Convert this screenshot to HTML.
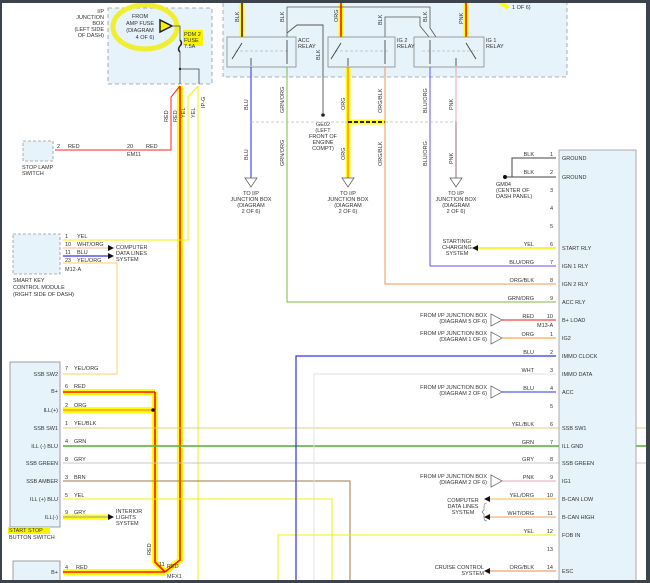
<!DOCTYPE html>
<html><head><meta charset="utf-8"><style>
html,body{margin:0;padding:0;background:#fff;}
svg{display:block;font-family:"Liberation Sans",sans-serif;}
text{font-size:5.5px;fill:#333;}
</style></head><body>
<svg width="650" height="583" viewBox="0 0 650 583" xmlns="http://www.w3.org/2000/svg">
<rect x="0" y="0" width="650" height="583" fill="#fff"/>
<!-- relay box -->
<rect x="223" y="2" width="344" height="75" fill="#e6f3fb" stroke="#999" stroke-dasharray="4,3" stroke-width="0.8"/>
<!-- IP junction box -->
<rect x="108" y="8" width="104" height="76" fill="#e6f3fb" stroke="#999" stroke-dasharray="4,3" stroke-width="0.8"/>
<ellipse cx="145" cy="27" rx="32" ry="22" fill="none" stroke="#f0ee30" stroke-width="5"/>
<polygon points="160,20 160,32 172,26" fill="#f5f000" stroke="#222" stroke-width="1.5"/>
<text x="140" y="18" text-anchor="middle">FROM</text>
<text x="140" y="25" text-anchor="middle">AMP FUSE</text>
<text x="140" y="32" text-anchor="middle">(DIAGRAM</text>
<text x="145" y="39" text-anchor="middle">4 OF 6)</text>
<text x="104" y="13" text-anchor="end">I/P</text>
<text x="104" y="19" text-anchor="end">JUNCTION</text>
<text x="104" y="25" text-anchor="end">BOX</text>
<text x="104" y="31" text-anchor="end">(LEFT SIDE</text>
<text x="104" y="37" text-anchor="end">OF DASH)</text>
<rect x="183" y="30" width="20" height="16" fill="#f8f400"/>
<text x="184" y="36">PDM 2</text><text x="184" y="42">FUSE</text><text x="184" y="48">7.5A</text>
<path d="M172,26 H180 V40 M180,52 V69 H199 V84 M180,69 V84" fill="none" stroke="#444" stroke-width="0.8"/>
<path d="M180,40 q3,3 0,6 q-3,3 0,6" fill="none" stroke="#222" stroke-width="1.5"/>
<circle cx="180" cy="69" r="1.2" fill="#222"/>

<!-- main highlighted wires -->
<g fill="none" stroke-linejoin="miter">
<path d="M180,86 V560 L165,572 M155,392 V562 L165,572 M63,392 H155 M63,410 H155 M63,572 H165" stroke="#ffff00" stroke-width="6"/>
<path d="M63,517 H110 M242,2 V37 M341,2 V37 M466,2 V37 M348,66 V178 M348,122 H385" stroke="#ffff00" stroke-width="5"/>
<path d="M180,86 V560 L165,572 M155,392 V562 L165,572 M63,392 H155 M63,572 H165 M242,2 V37 M341,2 V37 M466,2 V37" stroke="#ff1010" stroke-width="1.6"/>
<path d="M63,410 H153 M348,66 V178" stroke="#ff9a20" stroke-width="1.6"/>
<path d="M63,517 H110" stroke="#aaa" stroke-width="1.2"/>
<path d="M242,2 V37" stroke="#222" stroke-width="1.2"/>
<path d="M348,122 H385" stroke="#222" stroke-width="2" stroke-dasharray="4,2"/>
<path d="M180,86 L171,97 V150 H55" stroke="#ff2020" stroke-width="1"/>
<path d="M198,86 L188,97 V240 H63 M198,86 V583" stroke="#f4f000" stroke-width="1"/>
<!-- relays wiring top -->
<path d="M287,37 V7 H430 V28 L436,37 M385,37 V17 H420 V26 L429,37" stroke="#555" stroke-width="0.8"/>
<path d="M287,33 L297,25 H323 V113" stroke="#555" stroke-width="0.9"/>
<path d="M500,2 L508,8" stroke="#ffff00" stroke-width="4"/>
</g>
<text x="512" y="9">1 OF 6)</text>
<circle cx="323" cy="115" r="1.8" fill="#222"/>
<g text-anchor="middle">
<text x="323" y="126">GE02</text><text x="323" y="132">(LEFT</text><text x="323" y="138">FRONT OF</text><text x="323" y="144">ENGINE</text><text x="323" y="150">COMPT)</text>
</g>
<!-- relays -->
<g fill="#e6f3fb" stroke="#888" stroke-width="0.8">
<rect x="227" y="37" width="69" height="30"/><rect x="328" y="37" width="67" height="30"/><rect x="414" y="37" width="70" height="30"/>
</g>
<g stroke="#bbb" stroke-dasharray="3,2" stroke-width="0.7"><path d="M235,51 H290 M335,51 H388 M422,51 H478"/></g>
<g stroke="#333" stroke-width="0.8" fill="none">
<path d="M242,43 L232,59 M251,58 V66 M287,40 V64 M341,43 L331,59 M348,58 V66 M385,40 V64 M430,40 V64 M466,43 L476,59 M456,58 V66"/>
</g>
<text x="298" y="42">ACC</text><text x="298" y="48">RELAY</text>
<text x="397" y="42">IG 2</text><text x="397" y="48">RELAY</text>
<text x="486" y="42">IG 1</text><text x="486" y="48">RELAY</text>
<!-- relay down wires -->
<g fill="none">
<path d="M251,67 V178" stroke="#2a2af0" stroke-width="1"/>
<path d="M287,67 V302 H556" stroke="#80b840" stroke-width="1"/>
<path d="M385,67 V284 H556" stroke="#f09a50" stroke-width="1"/>
<path d="M430,67 V266 H556" stroke="#6050f0" stroke-width="1"/>
<path d="M456,67 V122" stroke="#f0a0b0" stroke-width="1"/>
<path d="M456,122 V178" stroke="#9a7070" stroke-width="1"/>
<path d="M251,122 H348 M385,122 H456" stroke="#bbb" stroke-width="0.7" stroke-dasharray="3,2"/>
</g>
<g fill="#fff" stroke="#555" stroke-width="0.7">
<polygon points="245,178 257,178 251,187"/><polygon points="342,178 354,178 348,187"/><polygon points="450,178 462,178 456,187"/>
</g>
<g text-anchor="middle">
<text x="251" y="195">TO I/P</text><text x="251" y="201">JUNCTION BOX</text><text x="251" y="207">(DIAGRAM</text><text x="251" y="213">2 OF 6)</text>
<text x="348" y="195">TO I/P</text><text x="348" y="201">JUNCTION BOX</text><text x="348" y="207">(DIAGRAM</text><text x="348" y="213">2 OF 6)</text>
<text x="456" y="195">TO I/P</text><text x="456" y="201">JUNCTION BOX</text><text x="456" y="207">(DIAGRAM</text><text x="456" y="213">2 OF 6)</text>
</g>
<g font-size="5">
<text transform="translate(239,22) rotate(-90)">BLK</text><text transform="translate(284,22) rotate(-90)">BLK</text>
<text transform="translate(338,22) rotate(-90)">ORG</text><text transform="translate(382,25) rotate(-90)">BLK</text>
<text transform="translate(427,22) rotate(-90)">BLK</text><text transform="translate(463,24) rotate(-90)">PNK</text>
<text transform="translate(320,60) rotate(-90)">BLK</text>
<text transform="translate(248,110) rotate(-90)">BLU</text><text transform="translate(284,113) rotate(-90)">GRN/ORG</text>
<text transform="translate(345,110) rotate(-90)">ORG</text><text transform="translate(382,113) rotate(-90)">ORG/BLK</text>
<text transform="translate(427,113) rotate(-90)">BLU/ORG</text><text transform="translate(453,110) rotate(-90)">PNK</text>
<text transform="translate(248,160) rotate(-90)">BLU</text><text transform="translate(284,166) rotate(-90)">GRN/ORG</text>
<text transform="translate(345,160) rotate(-90)">ORG</text><text transform="translate(382,166) rotate(-90)">ORG/BLK</text>
<text transform="translate(427,166) rotate(-90)">BLU/ORG</text><text transform="translate(453,164) rotate(-90)">PNK</text>
<text transform="translate(168,122) rotate(-90)">RED</text><text transform="translate(177,122) rotate(-90)">RED</text>
<text transform="translate(185,118) rotate(-90)">YEL</text><text transform="translate(195,118) rotate(-90)">YEL</text>
<text transform="translate(205,108) rotate(-90)">IP-G</text>
<text transform="translate(151,555) rotate(-90)">RED</text>
</g>
<!-- stop lamp -->
<rect x="23" y="141" width="30" height="20" fill="#e6f3fb" stroke="#999" stroke-dasharray="3,2" stroke-width="0.8"/>
<text x="57" y="148">2</text><text x="68" y="148">RED</text><text x="127" y="148">20</text><text x="146" y="148">RED</text><text x="127" y="156">EM11</text>
<text x="22" y="169">STOP LAMP</text><text x="22" y="175">SWITCH</text>
<!-- smart key -->
<rect x="13" y="234" width="47" height="40" fill="#e6f3fb" stroke="#999" stroke-dasharray="3,2" stroke-width="0.8"/>
<path d="M63,248 H110" stroke="#f0a870" stroke-width="0.8"/>
<path d="M63,256 H110" stroke="#3030f0" stroke-width="1.2"/>
<path d="M63,263 H117 V374 H63" stroke="#ffd060" stroke-width="0.9" fill="none"/>
<polygon points="108,245 114,248 108,251" fill="#111"/><polygon points="108,253 114,256 108,259" fill="#111"/>
<text x="65" y="238">1</text><text x="77" y="238">YEL</text>
<text x="65" y="246">10</text><text x="77" y="246">WHT/ORG</text>
<text x="65" y="254">11</text><text x="77" y="254">BLU</text>
<text x="65" y="262">23</text><text x="77" y="262">YEL/ORG</text>
<text x="65" y="271">M12-A</text>
<text x="116" y="249">COMPUTER</text><text x="116" y="255">DATA LINES</text><text x="116" y="261">SYSTEM</text>
<text x="13" y="282">SMART KEY</text><text x="13" y="289">CONTROL MODULE</text><text x="13" y="296">(RIGHT SIDE OF DASH)</text>
<!-- start stop -->
<rect x="10" y="362" width="50" height="165" fill="#e6f3fb" stroke="#888" stroke-width="0.8"/>
<rect x="8" y="527" width="42" height="7" fill="#f8f400"/>
<text x="9" y="532">START STOP</text><text x="9" y="539">BUTTON SWITCH</text>
<g text-anchor="end">
<text x="58" y="376">SSB SW2</text><text x="58" y="393">B+</text><text x="58" y="412">ILL(+)</text><text x="58" y="430">SSB SW1</text>
<text x="58" y="448">ILL (-) BLU</text><text x="58" y="465">SSB GREEN</text><text x="58" y="483">SSB AMBER</text><text x="58" y="501">ILL (+) BLU</text><text x="58" y="519">ILL(-)</text>
</g>
<g><text x="65" y="370">7</text><text x="74" y="370">YEL/ORG</text>
<text x="65" y="388">6</text><text x="74" y="388">RED</text>
<text x="65" y="407">2</text><text x="74" y="407">ORG</text>
<text x="65" y="425">1</text><text x="74" y="425">YEL/BLK</text>
<text x="65" y="443">4</text><text x="74" y="443">GRN</text>
<text x="65" y="461">8</text><text x="74" y="461">GRY</text>
<text x="65" y="479">3</text><text x="74" y="479">BRN</text>
<text x="65" y="497">5</text><text x="74" y="497">YEL</text>
<text x="65" y="514">9</text><text x="74" y="514">GRY</text></g>
<text x="116" y="513">INTERIOR</text><text x="116" y="519">LIGHTS</text><text x="116" y="525">SYSTEM</text>
<polygon points="108,514 114,517 108,520" fill="#111"/>
<circle cx="153" cy="410" r="1.8" fill="#111"/>
<g fill="none">
<path d="M63,428 H650" stroke="#d8d080" stroke-width="1"/>
<path d="M63,446 H650" stroke="#6ab84c" stroke-width="1.8"/>
<path d="M63,463 H650" stroke="#c8c8c8" stroke-width="1"/>
<path d="M63,481 H350 V583" stroke="#a07840" stroke-width="1"/>
<path d="M63,499 H332 V583" stroke="#f4f000" stroke-width="1"/>
<path d="M278,583 V535 H556" stroke="#f4f000" stroke-width="1"/>
<path d="M296,583 V356 H556" stroke="#3030f0" stroke-width="1.2"/>
<path d="M314,583 V374 H556" stroke="#e0e0e0" stroke-width="1"/>
</g>
<rect x="13" y="561" width="47" height="22" fill="#e6f3fb" stroke="#888" stroke-width="0.8"/>
<text x="58" y="574" text-anchor="end">B+</text><text x="65" y="569">4</text><text x="76" y="569">RED</text>
<text x="159" y="566">11</text><text x="167" y="568">RED</text><text x="167" y="578">MFX1</text>
<!-- right module -->
<rect x="559" y="150" width="77" height="433" fill="#e6f3fb" stroke="#999" stroke-width="0.8"/>
<g fill="none" stroke-width="1">
<path d="M556,158 H512 V177 M556,177 H505" stroke="#444"/>
<path d="M478,248 H556" stroke="#f4f000" stroke-width="1.4"/>
<path d="M502,320 H556" stroke="#ff1010"/>
<path d="M502,338 H556" stroke="#ff9020"/>
<path d="M502,392 H556" stroke="#2030f0"/>
<path d="M502,481 H556" stroke="#f0a0b0"/>
<path d="M490,499 H556" stroke="#ffc860" stroke-width="1.2"/>
<path d="M490,517 H556" stroke="#f0b080" stroke-width="1.2"/>
<path d="M490,571 H556" stroke="#f0a070" stroke-width="1.2"/>
<path d="M487,503 q-3,0 -3,3 v4 l-2,2 l2,2 v4 q0,3 3,3" stroke="#666" stroke-width="0.6"/>
</g>
<circle cx="505" cy="177" r="2" fill="#111"/>
<text x="496" y="186">GM04</text><text x="496" y="192">(CENTER OF</text><text x="496" y="198">DASH PANEL)</text>
<polygon points="478,245 472,248 478,251" fill="#111"/>
<polygon points="490,496 484,499 490,502" fill="#111"/><polygon points="490,514 484,517 490,520" fill="#111"/><polygon points="490,568 484,571 490,574" fill="#111"/>
<g fill="#fff" stroke="#555" stroke-width="0.7">
<polygon points="491,314 491,326 502,320"/><polygon points="491,332 491,344 502,338"/><polygon points="491,386 491,398 502,392"/><polygon points="491,475 491,487 502,481"/>
</g>
<g text-anchor="middle"><text x="457" y="243">STARTING/</text><text x="457" y="249">CHARGING</text><text x="457" y="255">SYSTEM</text>
<text x="463" y="502">COMPUTER</text><text x="463" y="508">DATA LINES</text><text x="463" y="514">SYSTEM</text></g>
<g text-anchor="end">
<text x="487" y="317">FROM I/P JUNCTION BOX</text><text x="487" y="323">(DIAGRAM 5 OF 6)</text>
<text x="487" y="335">FROM I/P JUNCTION BOX</text><text x="487" y="341">(DIAGRAM 1 OF 6)</text>
<text x="487" y="389">FROM I/P JUNCTION BOX</text><text x="487" y="395">(DIAGRAM 2 OF 6)</text>
<text x="487" y="478">FROM I/P JUNCTION BOX</text><text x="487" y="484">(DIAGRAM 2 OF 6)</text>
<text x="484" y="569">CRUISE CONTROL</text><text x="484" y="575">SYSTEM</text>
<text x="534" y="156">BLK</text><text x="534" y="174">BLK</text><text x="534" y="246">YEL</text><text x="534" y="264">BLU/ORG</text>
<text x="534" y="282">ORG/BLK</text><text x="534" y="300">GRN/ORG</text><text x="534" y="318">RED</text><text x="534" y="336">ORG</text>
<text x="534" y="354">BLU</text><text x="534" y="372">WHT</text><text x="534" y="390">BLU</text><text x="534" y="426">YEL/BLK</text>
<text x="534" y="444">GRN</text><text x="534" y="461">GRY</text><text x="534" y="479">PNK</text><text x="534" y="497">YEL/ORG</text>
<text x="534" y="515">WHT/ORG</text><text x="534" y="533">YEL</text><text x="534" y="569">ORG/BLK</text>
<text x="553" y="156">1</text><text x="553" y="174">2</text><text x="553" y="192">3</text><text x="553" y="210">4</text><text x="553" y="228">5</text>
<text x="553" y="246">6</text><text x="553" y="264">7</text><text x="553" y="282">8</text><text x="553" y="300">9</text><text x="553" y="318">10</text>
<text x="553" y="336">1</text><text x="553" y="354">2</text><text x="553" y="372">3</text><text x="553" y="390">4</text><text x="553" y="408">5</text>
<text x="553" y="426">6</text><text x="553" y="444">7</text><text x="553" y="461">8</text><text x="553" y="479">9</text><text x="553" y="497">10</text>
<text x="553" y="515">11</text><text x="553" y="533">12</text><text x="553" y="551">13</text><text x="553" y="569">14</text>
</g>
<text x="537" y="327">M13-A</text>
<g>
<text x="562" y="160">GROUND</text><text x="562" y="179">GROUND</text><text x="562" y="250">START RLY</text><text x="562" y="268">IGN 1 RLY</text>
<text x="562" y="286">IGN 2 RLY</text><text x="562" y="304">ACC RLY</text><text x="562" y="322">B+ LOAD</text><text x="562" y="340">IG2</text>
<text x="562" y="358">IMMO CLOCK</text><text x="562" y="376">IMMO DATA</text><text x="562" y="394">ACC</text><text x="562" y="430">SSB SW1</text>
<text x="562" y="448">ILL GND</text><text x="562" y="465">SSB GREEN</text><text x="562" y="483">IG1</text><text x="562" y="501">B-CAN LOW</text>
<text x="562" y="519">B-CAN HIGH</text><text x="562" y="537">FOB IN</text><text x="562" y="573">ESC</text>
</g>
<!-- frame -->
<rect x="0" y="0" width="650" height="3" fill="#3c434c"/>
<rect x="0" y="580" width="650" height="3" fill="#3c434c"/>
<rect x="0" y="0" width="2" height="583" fill="#3c434c"/>
<rect x="646" y="0" width="4" height="583" fill="#3c434c"/>
</svg>
</body></html>
